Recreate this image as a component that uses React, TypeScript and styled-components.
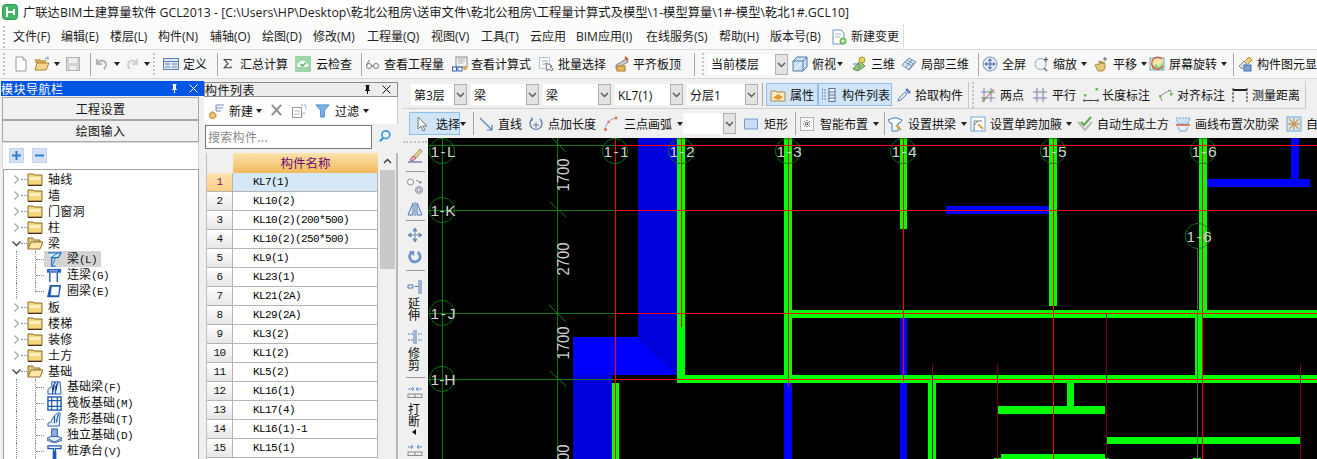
import React from 'react';
import styled, { createGlobalStyle } from 'styled-components';

const UI = `"Open Sans","Noto Sans CJK SC",sans-serif`;
const CJK = `"Noto Sans CJK SC",sans-serif`;

const Global = createGlobalStyle`
  html, body { margin: 0; padding: 0; background: #f0f0f0; }
  * { box-sizing: border-box; }
`;

const Page = styled.div`
  width: 1317px; height: 459px; overflow: hidden; display: flex; flex-direction: column;
  font: 12px/16px ${UI}; color: #111; background: #f0f0f0;
`;
const TitleBar = styled.div`
  height: 24px; flex: none; background: #fff; display: flex; align-items: center; gap: 5px; padding-left: 2px;
  font-size: 12.32px; white-space: nowrap; color: #1a1a1a;
`;
const TitleText = styled.span`padding-top: 1px;`;
const MenuBar = styled.div`height: 25px; flex: none; background: #fff; display: flex;`;
const MenuGroup = styled.div`
  width: 904px; height: 25px; display: flex; align-items: center; padding-left: 3px;
  border-right: 1px solid #ddd; background: #fbfbfb;
`;
const MenuItem = styled.div<{ $w: number }>`
  width: ${p => p.$w}px; flex: none; display: flex; align-items: center; gap: 4px; white-space: nowrap; color: #222; padding-top: 1px;
`;
const Grip = styled.div<{ $w?: number }>`
  width: ${p => p.$w ?? 10}px; flex: none; height: 22px;
  &::before { content: ''; display: block; width: 0; height: 100%; border-left: 2px dotted #c4c4c4; }
`;
const TopToolbar = styled.div`
  height: 30px; flex: none; display: flex; align-items: center; padding-left: 3px; overflow: hidden;
  background: #f7f7f7; border-top: 1px solid #dcdcdc; border-bottom: 1px solid #d8d8d8;
`;
const Sep = styled.div<{ $w: number }>`
  width: ${p => p.$w}px; flex: none; height: 23px; display: flex; justify-content: center;
  &::after { content: ''; width: 1px; height: 100%; background: #a8a8a8; }
`;
const Tool = styled.div<{ $w?: number; $gap?: number; $active?: boolean; $pad?: number }>`
  ${p => (p.$w ? `width:${p.$w}px;` : '')}
  flex: none; display: flex; align-items: center; gap: ${p => p.$gap ?? 4}px; white-space: nowrap; height: 23px;
  padding-left: ${p => p.$pad ?? 0}px;
  ${p => (p.$active ? 'background:#cfe4f7;border:1px solid #8ec1ea;' : '')}
`;
const ToolText = styled.span`padding-top: 2px;`;
const Arrow = styled.span`
  width: 0; height: 0; flex: none; margin-left: 0; border-left: 3.5px solid transparent; border-right: 3.5px solid transparent;
  border-top: 4px solid #222;
`;
const Glyph = styled.svg<{ $s?: number }>`flex: none; width: ${p => p.$s ?? 16}px; height: ${p => p.$s ?? 16}px; display: block;`;
const Combo = styled.div<{ $w: number; $mr?: number }>`
  width: ${p => p.$w}px; height: 21px; flex: none; margin-right: ${p => p.$mr ?? 4}px; background: #fff; display: flex;
  align-items: center; justify-content: space-between; padding-left: 3px; white-space: nowrap;
`;
const ComboBtn = styled.div`
  width: 13px; height: 21px; background: #e3e3e3; border: 1px solid #b0b0b0; display: flex; align-items: center; justify-content: center;
`;

const Main = styled.div`flex: 1; min-height: 0; display: flex;`;
const NavCol = styled.div`width: 203px; margin-left: 1px; flex: none; padding-top: 2px; display: flex; flex-direction: column;`;
const NavHead = styled.div`
  height: 15px; flex: none; background: #0055e3; color: #fff; display: flex; align-items: center; justify-content: space-between;
  font: 12px/15px ${CJK}; letter-spacing: .5px; padding-right: 6px;
`;
const HeadIcons = styled.div`display: flex; align-items: center; gap: 10px;`;
const NavBody = styled.div`flex: 1; min-height: 0; padding: 1px 5px 0 1px; display: flex; flex-direction: column;`;
const NavBtn = styled.div<{ $h: number }>`
  height: ${p => p.$h}px; flex: none; border: 1px solid #a8a8a8; background: #f0f0f0; display: flex; align-items: center; justify-content: center;
  font: 12px/16px ${CJK}; letter-spacing: .4px;
`;
const PlusRow = styled.div`
  height: 27px; flex: none; background: #fff; border: 1px solid #d8d8d8; border-bottom: 0; display: flex; align-items: flex-start; gap: 8px;
  padding: 5px 0 0 6px;
`;
const SquareBtn = styled.div`width: 15px; height: 15px; background: #d4e0f7; border: 1px solid #c4d2ee; display: flex; align-items: center; justify-content: center;`;
const Tree = styled.div`
  flex: 1; min-height: 0; background: #fff; border: 1px solid #a0a0a0; border-bottom: 0; padding-top: 1px; margin-left: 1px; overflow: hidden;
  font: 12px/16px ${CJK};
`;
const FolderRow = styled.div`height: 16px; display: flex; align-items: center; padding-left: 8px; gap: 0;`;
const Dots = styled.span`width: 6px; height: 0; flex: none; border-top: 1px dotted #888;`;
const FolderLabel = styled.span`margin-left: 5px; letter-spacing: .2px;`;
const ChildRow = styled.div`height: 16px; display: flex; align-items: center; padding-left: 12px;`;
const GuideOuter = styled.span`
  width: 19px; flex: none; align-self: flex-start; height: 16px; border-left: 1px dotted #888;
`;
const GuideInner = styled.span<{ $last?: boolean }>`
  width: 9px; flex: none; align-self: flex-start; height: ${p => (p.$last ? 9 : 16)}px; border-left: 1px dotted #888; position: relative;
  &::after { content: ''; position: absolute; left: 0; right: 0; top: 8px; border-top: 1px dotted #888; }
`;
const ChildItem = styled.div<{ $sel?: boolean }>`
  display: flex; align-items: center; gap: 5px; padding: 0 4px 0 3px; height: 16px; white-space: nowrap;
  background: ${p => (p.$sel ? '#d4d4d4' : 'transparent')};
`;
const Mono = styled.span`font: 11px/16px "Liberation Mono", monospace; letter-spacing: -.6px;`;

const ListCol = styled.div`width: 194px; flex: none; padding-top: 3px; display: flex; flex-direction: column;`;
const ListHead = styled.div`
  height: 15px; flex: none; background: #ececec; border: 1px solid #8a8a8a; display: flex; align-items: center; justify-content: space-between;
  font: 12px/13px ${CJK}; letter-spacing: .5px; padding-right: 6px;
`;
const ListTools = styled.div`height: 27px; flex: none; background: #fff; display: flex; align-items: center; padding-left: 5px; border-right: 1px solid #ccc;`;
const SearchRow = styled.div`height: 29px; flex: none; display: flex; align-items: flex-start; padding: 1px 0 0 1px; gap: 6px;`;
const SearchInput = styled.div`
  width: 167px; height: 24px; background: #fff; border: 1px solid #777; padding-left: 2px; color: #8a8a8a; font: 12px/21px ${CJK}; letter-spacing: .3px;
`;
const SearchBtn = styled.div`padding-top: 4px;`;
const TableWrap = styled.div`
  flex: 1; min-height: 0; display: flex; padding-left: 2px; overflow: hidden; border-right: 2px solid #b8b8b8; background: #f0f0f0;
`;
const Table = styled.div`width: 172px; flex: none; background: #fff; border-left: 1px solid #c0c0c0;`;
const HeadRow = styled.div`height: 20px; display: flex;`;
const Corner = styled.div`width: 26px; flex: none; background: #f0f0f0;`;
const NameHead = styled.div`
  flex: 1; background: linear-gradient(#fbe3ad, #f0b95c); color: #6b0a75; display: flex; align-items: center; justify-content: center;
  font: 12.5px/16px ${CJK};
`;
const Row = styled.div`height: 19px; display: flex; border-bottom: 1px solid #b4b4b4;`;
const Idx = styled.div<{ $sel?: boolean }>`
  width: 26px; flex: none; border-right: 1px solid #b4b4b4; display: flex; align-items: center; justify-content: center;
  background: ${p => (p.$sel ? 'linear-gradient(#fde3b0,#fbcf85)' : 'linear-gradient(#fff,#e6e6e6)')};
  color: ${p => (p.$sel ? '#70107a' : '#111')};
  font: 11px/16px "Liberation Mono", monospace; letter-spacing: -.6px;
`;
const Name = styled.div<{ $sel?: boolean }>`
  flex: 1; padding-left: 20px; border-right: 1px solid #b4b4b4; background: ${p => (p.$sel ? '#d6e8f8' : '#fff')}; white-space: nowrap;
  font: 11px/18px "Liberation Mono", monospace; letter-spacing: -.6px; color: #000;
`;
const Scroll = styled.div`width: 16px; flex: none; display: flex; flex-direction: column; align-items: center; margin-left: 1px;`;
const ScrollUp = styled.div`height: 17px; flex: none; display: flex; align-items: center; justify-content: center;`;
const Thumb = styled.div`width: 15px; height: 99px; background: #c9c9c9;`;

const WorkCol = styled.div`flex: 1; min-width: 0; display: flex; flex-direction: column; padding: 2px 0 0 4px;`;
const Row2 = styled.div`
  height: 28px; flex: none; width: 904px; display: flex; align-items: center; padding-left: 9px;
  border-bottom: 1px solid #d0d0d0; border-right: 1px solid #c8c8c8; overflow: hidden;
`;
const Row3 = styled.div`height: 29px; flex: none; display: flex; align-items: center; padding-left: 7px; overflow: hidden;`;
const GripSep = styled.div`
  width: 12px; flex: none; height: 26px; display: flex; gap: 2px;
  &::before { content: ''; width: 1px; height: 100%; background: #c8c8c8; }
  &::after { content: ''; height: 100%; border-left: 2px dotted #c4c4c4; margin-left: 1px; }
`;
const Work = styled.div`flex: 1; min-height: 0; display: flex;`;
const VBar = styled.div`width: 26px; flex: none; display: flex; flex-direction: column; align-items: center; overflow: hidden;`;
const VGrip = styled.div`width: 24px; height: 0; margin-top: 3px; border-top: 2px dotted #c4c4c4; flex: none;`;
const VSep = styled.div<{ $mt: number }>`width: 19px; height: 1px; background: #999; margin-top: ${p => p.$mt}px; flex: none;`;
const VIcon = styled.div<{ $mt: number }>`margin-top: ${p => p.$mt}px; flex: none; height: 16px;`;
const VText = styled.div<{ $mt: number }>`
  width: 12px; margin-top: ${p => p.$mt}px; flex: none; font: 12px/12px ${CJK}; text-align: center; color: #111; margin-right: 2px;
`;
const TinyLeft = styled.span`
  flex: none; margin: 2px 2px 0 0; width: 0; height: 0; border-top: 3.5px solid transparent; border-bottom: 3.5px solid transparent; border-right: 4px solid #111;
`;
const CadBox = styled.div`flex: 1; min-width: 0; background: #000; overflow: hidden;`;
const CadSvg = styled.svg`display: block; width: 889px; height: 321px;`;

const dark = '#5f7fb0';
const blue = '#2a5db5';
const I: Record<string, React.ReactNode> = {
  logo: <><rect x=".5" y=".5" width="15" height="15" rx="3" fill="#43b764" stroke="#2f9d4f" /><path d="M4 3h2v4h5V5h2v6h-2V9H6v4H4z" fill="#fff" /></>,
  doc: <><path d="M3 1h7l3 3v11H3z" fill="#fff" stroke="#999" /><path d="M10 1v3h3" fill="#eee" stroke="#999" /></>,
  open: <><path d="M1 5V3h5l1 1h5v3H1z" fill="#cfa95a" /><path d="M1 14 3 7h12l-3 7z" fill="#f3d689" stroke="#a98436" /><path d="M11 3l3-2v3" fill="none" stroke="#6d93c7" /></>,
  save: <><rect x="1.5" y="1.5" width="13" height="13" fill="#d4d4d4" stroke="#b0b0b0" /><rect x="4" y="2" width="8" height="5" fill="#f0f0f0" /><rect x="5" y="10" width="6" height="4" fill="#f0f0f0" /></>,
  undo: <path d="M3 3v5h5M3 8c2-5 9-4 9 1 0 2-1 3-2 4" fill="none" stroke="#b4b4b4" strokeWidth="2" />,
  redo: <path d="M13 3v5H8M13 8C11 3 4 4 4 9c0 2 1 3 2 4" fill="none" stroke="#cfcfcf" strokeWidth="2" />,
  define: <><rect x=".5" y="2.5" width="15" height="11" fill="#dfe8f4" stroke={dark} /><path d="M1 5.5h14M2 8h5M2 11h5M9 8h5M9 11h5" stroke={dark} /></>,
  sigma: <path d="M3 2h9v2M12 2H3l5 5.500L3 13h9v-2" fill="none" stroke="#444" strokeWidth="1.500" />,
  cloud: <><rect width="16" height="16" rx="1" fill="#9ed6a8" /><path d="M3 11c-2-1-1-4 1-4 1-3 6-3 7 0 3 0 3 4 1 4z" fill="#f4fbf5" /><path d="M5.500 8l2 2 3-3" fill="none" stroke="#4da35f" strokeWidth="1.300" /></>,
  glasses: <><circle cx="4" cy="10" r="2.500" fill="#fff" stroke="#777" /><circle cx="11" cy="10" r="2.500" fill="#fff" stroke="#777" /><path d="M6.500 10h2M1.500 9l3-5" stroke="#777" fill="none" /></>,
  report: <><rect x="4" y="1" width="11" height="10" fill="#f4f4f4" stroke="#888" /><path d="M6 3h7M6 5h7M6 7h5" stroke="#aaa" /><rect x=".5" y="11" width="4" height="4" fill="#fff" stroke={blue} /><rect x="6" y="11" width="4" height="4" fill="#fff" stroke={blue} /><circle cx="13" cy="12" r="2" fill="#d9a441" /></>,
  batch: <><rect x="1.500" y="1.500" width="10" height="11" fill="#fff" stroke="#8fa7c9" strokeDasharray="2 1" /><path d="M4 5h6M4 8h6" stroke="#aaa" /><path d="M8 7l1 8 2-2 3 2 1-2-3-2 2-1z" fill="#fff" stroke="#777" /></>,
  flat: <><path d="M2 9l10-6 2 3-12 7z" fill="#c7c7c7" stroke="#888" /><rect x="3" y="10" width="8" height="5" fill="#e7b659" stroke="#a67a25" /><path d="M11 1l3 3" stroke="#c05a2a" strokeWidth="2" /></>,
  cube: <><path d="M1 5l4-4h10v10l-4 4H1z" fill="#cfe2f5" stroke="#4d7aa8" /><path d="M1 5h10v10M11 5l4-4" fill="none" stroke="#4d7aa8" /><path d="M2 14 10 6" stroke="#fff" /></>,
  three: <><path d="M2 13 9 5l5 5-7 5z" fill="#8dc96f" stroke="#58913e" /><circle cx="11" cy="4" r="3" fill="#e5d25b" stroke="#aa9a2d" /><path d="M2 8h6v5" fill="none" stroke={dark} /></>,
  lattice: <><path d="M1 9l7-7 7 4-7 8z" fill="#dfe8f5" stroke="#6f8db8" /><path d="M4 6l7 4M6 4l7 4M5 11l6-7M8 13l5-6" stroke="#6f8db8" /></>,
  full: <><circle cx="8" cy="8" r="7" fill="#dfe9f7" stroke="#7591ba" /><path d="M8 3v10M3 8h10M8 3 6.500 5M8 3l1.500 2M8 13l-1.500-2M8 13l1.500-2M3 8l2-1.500M3 8l2 1.500M13 8l-2-1.500M13 8l-2 1.500" stroke="#3a5f98" fill="none" /></>,
  zoomi: <><circle cx="6.500" cy="8" r="5.500" fill="#f2f5f8" stroke="#99a6b8" /><path d="M10 12l3 3" stroke="#888" strokeWidth="2" /><path d="M12 1v5M10 3.500h4" stroke="#555" /></>,
  pan: <><path d="M2 9l2-1 2 1V5l1 0 1 3 1-3 1 3 1-2 1 3v3l-2 3H5z" fill="#e6c97c" stroke="#a98b3f" /><path d="M12 1v4M10 3h4" stroke="#666" /></>,
  spin: <><rect x="1" y="2" width="14" height="12" fill="#f3e7a5" stroke="#66a8d8" /><path d="M3 12l4-4 3 3 4-5v7H3z" fill="#8fcf8d" /><path d="M13 3A6 6 0 1 0 14 10" fill="none" stroke="#e24b3b" strokeWidth="1.300" /></>,
  show: <><path d="M2 10l5-5 3 3-5 5z" fill="#ddd" stroke="#888" /><path d="M8 5l4-4 3 3-4 4" fill="#eed17a" stroke="#a78a3c" /><rect x="7" y="9" width="7" height="6" fill="#7ba0d4" stroke="#4c74ad" /></>,
  newDoc: <><path d="M2 1h8l3 3v11H2z" fill="#fff" stroke="#6d93c7" /><path d="M4 5h6M4 8h5" stroke="#9db6d8" /><circle cx="12" cy="12" r="3.500" fill="#6cbb4c" /><path d="M12 10v4M10 12h4" stroke="#fff" /></>,
  attr: <><path d="M1 4h5l1 1h8v9H1z" fill="#f7ecc7" stroke="#a88a4a" /><path d="M3 11l5-4 5 3-4 3z" fill="#e59a2c" /></>,
  listI: <><path d="M1.500 2v12M4 2v12" stroke="#6f8db8" strokeDasharray="2 1" /><rect x="8" y="1.500" width="6" height="13" fill="#f5f5f5" stroke="#4f6f9f" /><path d="M8 5h6M8 8h6M8 11h6" stroke="#4f6f9f" /></>,
  pick: <><path d="M2 14l1-3 6-6 2 2-6 6z" fill="#dce8f7" stroke="#5d86bd" /><path d="M9 3l2-2 4 4-2 2z" fill="#5d86bd" /></>,
  two: <><path d="M4 1v14M11 1v14M1 5h14M1 11h14" stroke="#8282b0" /><path d="M2 15 14 2" stroke="#d9453a" /><circle cx="4" cy="12" r="1.500" fill="#67b34a" /><circle cx="11" cy="5" r="1.500" fill="#67b34a" /></>,
  para: <path d="M5 1v14M11 1v14M1 5h14M1 11h14" stroke="#7c7ca6" />,
  len: <><path d="M1 12v3M15 12v3M1 13.500h14" stroke="#444" /><rect x="1" y="7" width="2.500" height="2.500" fill="#6abf4b" /><rect x="12.500" y="1" width="2.500" height="2.500" fill="#6abf4b" /><path d="M6 13.500l2-1v2zM10 13.500l-2-1" fill="#444" /></>,
  align: <><path d="M3 9l10-6M3 9l2 5M13 3l2 4" stroke="#555" strokeDasharray="2 1" fill="none" /><rect x="2" y="8" width="2.500" height="2.500" fill="#6abf4b" /><rect x="13" y="6" width="2.500" height="2.500" fill="#6abf4b" /></>,
  meas: <><path d="M1 1v14M15 1v14" stroke="#333" strokeDasharray="3 1" /><path d="M1 3h14" stroke="#222" strokeWidth="2" /></>,
  cursor: <path d="M4 1v12l3-3 2 5 2-1-2-4h4z" fill="#f7f7f7" stroke="#777" />,
  line: <path d="M2 2l12 12M14 9v5H9" fill="none" stroke="#5580b8" strokeWidth="1.200" />,
  addLen: <><path d="M12 3a6 6 0 1 1-8 0" fill="none" stroke="#5f7fa8" strokeWidth="1.300" /><path d="M3 1l2 3-3 1M8 6v6M5 9h6" fill="none" stroke="#5f7fa8" /></>,
  arc: <><path d="M2 14C3 7 7 3 13 2" fill="none" stroke="#8aa0bf" /><circle cx="2.500" cy="13.500" r="1.500" fill="#e1694f" /><circle cx="5.500" cy="6" r="1.200" fill="#e1694f" /><circle cx="13" cy="2" r="1.500" fill="#e1694f" /></>,
  rect: <rect x="1.500" y="3" width="13" height="10" fill="#c9dbf5" stroke="#7d9ccc" />,
  smart: <><rect x="1.500" y="1.500" width="13" height="13" fill="#f8f8f8" stroke="#777" strokeDasharray="1 1" /><path d="M8 4v8M4 8h8M5 5l6 6M11 5l-6 6" stroke="#444" strokeDasharray="1 1" /></>,
  arch: <><path d="M1 4l5-2h4l5 2-2 3h-2v8H5V7H3z" fill="#fff" stroke="#3f7fbd" /><path d="M9 9l5 5" stroke="#d9a441" strokeWidth="2" /></>,
  haunch: <><rect x="1" y="1" width="14" height="14" fill="#fff" stroke="#6ba6d8" /><path d="M4 15V5h8M4 9l4-4" fill="none" stroke="#777" /><path d="M8 8l5 5" stroke="#d9a441" strokeWidth="2" /></>,
  earth: <><path d="M1 6l7 8 7-8" fill="none" stroke="#bbb" strokeWidth="2" /><path d="M4 6l3 3 7-8" fill="none" stroke="#5aad4a" strokeWidth="2" /></>,
  rib: <><path d="M1 2h14l-2 6H3z" fill="#cfe3f5" stroke="#6ba6d8" strokeDasharray="2 1" /><path d="M1 9h14" stroke="#d55a4a" strokeWidth="1.500" /><path d="M3 11l2 4h6l2-4" fill="none" stroke="#6ba6d8" /></>,
  autoRib: <><rect x="1" y="1" width="14" height="14" fill="#d7e9f8" stroke="#6ba6d8" /><path d="M3 3l10 10M13 3 3 13M8 2v12M2 8h12" stroke="#c99b52" strokeWidth="1.300" /></>,
  addNew: <><path d="M7 2h8M7 5h7M7 8h5M7 2v6" stroke="#6f8db8" fill="none" /><path d="M2 9h3v2h2v3H5v2H2v-2H0v-3h2z" fill="#efc96b" stroke="#b9934a" /></>,
  del: <path d="M3 2l10 11M13 2 3 13" stroke="#8a8a8a" strokeWidth="2" />,
  copy: <><rect x="1.500" y="4.500" width="9" height="10" fill="#fff" stroke="#9a9a9a" /><path d="M3 8h6M3 11h6" stroke="#bbb" /><path d="M10 2h5v5M13 9v2h-2" fill="none" stroke="#7f9fc9" strokeDasharray="2 1" /></>,
  filter: <path d="M1 2h14l-5 6v7H6V8z" fill="#79b2ea" stroke="#4c86c4" />,
  search: <><circle cx="9" cy="6.500" r="4.500" fill="#f3f8fd" stroke="#3d9be0" strokeWidth="2" /><path d="M6 10l-4 4" stroke="#3d9be0" strokeWidth="2.500" /></>,
  folder: <><path d="M1 4V3h5l1 1h8v10H1z" fill="#f7d67c" stroke="#8a6a2a" /><path d="M2 6h12v3H2z" fill="#fdf0c0" /><path d="M1 14.500h14" stroke="#3d3320" /></>,
  folderOpen: <><path d="M1 14V3h5l1 2h6v2" fill="#e6c878" stroke="#8a6a2a" /><path d="M1 14 4 7h12l-3 7z" fill="#fbe7a8" stroke="#8a6a2a" /></>,
  beam: <><path d="M1 1h14l-3 5H5v9h4" fill="#d8ebfb" stroke="#1f6fc4" strokeWidth="1.300" /><path d="M4 6 12 1M6 14l3-8" stroke="#1f6fc4" /></>,
  link: <><rect x="0" y="1" width="15" height="4" fill="#2a62c0" /><path d="M3 3h9" stroke="#fff" strokeDasharray="2 1" /><path d="M3 5v10M11 5v10" stroke="#1f5ab0" strokeWidth="1.500" /></>,
  ring: <><path d="M3 1h12l-2 13H0z" fill="#1f5ab0" /><path d="M5 3h8l-1 9H4z" fill="#fff" /></>,
  fbeam: <><path d="M1 15v-5l4-3V2h9l1 13z" fill="#e6eef9" stroke="#1f5ab0" /><path d="M9 2l-3 6v7M12 2 9 8v7" stroke="#1f5ab0" strokeWidth="1.300" /></>,
  raft: <><rect x="1" y="1" width="14" height="14" fill="#fff" stroke="#1f5ab0" strokeWidth="1.500" /><path d="M5 1v14M11 1v14M1 5h14M1 11h14" stroke="#1f5ab0" strokeWidth="1.300" /></>,
  strip: <><path d="M1 15v-3l3-1 3-6 4-4h3l-1 14z" fill="#eef3fb" stroke="#1f5ab0" /><path d="M8 4v8M12 2l-2 9" stroke="#1f5ab0" strokeWidth="1.300" /></>,
  iso: <><path d="M0 11l8-4 8 4-8 4z" fill="#dce7f8" stroke="#1f5ab0" /><path d="M0 11v2l8 3 8-3v-2" fill="none" stroke="#1f5ab0" /><rect x="5" y="1" width="6" height="8" fill="#8fb0e3" stroke="#1f5ab0" /></>,
  pile: <><path d="M1 2h14v3H9v3H7V5H1z" fill="#e8eff9" stroke="#1f5ab0" strokeWidth="1.300" /><rect x="6" y="8" width="4" height="8" fill="#1f5ab0" /></>,
  brush: <><path d="M1 14h14" stroke="#6f87ad" strokeWidth="1.500" /><path d="M3 12l3-4 3 2-3 3z" fill="#e7a3c0" stroke="#b85a8a" /><path d="M7 8l6-7 2 2-6 7z" fill="#e9d796" stroke="#a8904a" /></>,
  circles: <><circle cx="3.500" cy="4" r="3" fill="#fff" stroke="#889" /><circle cx="12" cy="12" r="3.500" fill="none" stroke="#889" /><circle cx="12" cy="12" r="2" fill="none" stroke="#889" /><path d="M9 2l5 3M14 3v2h-2" fill="none" stroke="#889" /></>,
  mirror: <><path d="M1 14 6 2v12zM15 14 10 2v12z" fill="#dbe7f7" stroke="#4f78b3" /><path d="M8 1v14" stroke="#4f78b3" /></>,
  move: <path d="M8 1v14M1 8h14M8 1 6 4h4zM8 15l-2-3h4zM1 8l3-2v4zM15 8l-3-2v4z" fill="#6f8db8" stroke="#6f8db8" />,
  rotate: <><path d="M11 2.500A6 6 0 1 1 4 3" fill="none" stroke="#6f8fcf" strokeWidth="3" /><path d="M1 1h6v6z" fill="#6f8fcf" /></>,
  extend: <><path d="M14 1v14M12 1v14" stroke="#4f78b3" /><path d="M1 6h5v3H1zM8 7.500h3" fill="#eef3fb" stroke="#4f78b3" /></>,
  trim: <><path d="M7 1v14M9 1v14" stroke="#4f78b3" /><path d="M1 5h6M1 11h6M11 5h4M11 11h4" stroke="#4f78b3" strokeDasharray="2 1" /></>,
  breakI: <><path d="M1 4h5M5 2l2 2-2 2M15 4h-5M11 2 9 4l2 2" fill="none" stroke="#5f8ad0" /><rect x="1" y="9" width="14" height="3.500" fill="#eee" stroke="#888" /><path d="M8 9v4" stroke="#888" /></>,
  joinI: <><path d="M1 4h5M4 2l2 2-2 2M15 4h-5M12 2l-2 2 2 2" fill="none" stroke="#5f8ad0" /><rect x="1" y="9" width="14" height="3.500" fill="#eee" stroke="#888" /><path d="M8 9v4" stroke="#888" /></>,
};

const Ic = ({ n, s }: { n: string; s?: number }) => <Glyph $s={s} viewBox="0 0 16 16">{I[n]}</Glyph>;

const Chevron = ({ color = '#555', up }: { color?: string; up?: boolean }) => (
  <Glyph $s={9} viewBox="0 0 9 9"><path d={up ? 'M1 6l3.500-3.500L8 6' : 'M1 3l3.500 3.500L8 3'} fill="none" stroke={color} strokeWidth="1.300" /></Glyph>
);

const Pin = ({ c }: { c: string }) => (
  <Glyph $s={9} viewBox="0 0 9 9"><path d="M2.500 0h4v1h-.500v4H7v1H5v3H4V6H2V5h1V1h-.500z" fill={c} /></Glyph>
);
const Close = ({ c }: { c: string }) => (
  <Glyph $s={9} viewBox="0 0 9 9"><path d="M.500.500l8 8M8.500.500l-8 8" stroke={c} /></Glyph>
);

type TP = { n?: string; t?: string; w?: number; gap?: number; arrow?: boolean; active?: boolean; pad?: number; ah?: number; s?: number };
const ArrowGap = styled.span<{ $m: number }>`display: inline-flex; margin-left: ${p => p.$m}px;`;
const T = ({ n, t, w, gap, arrow, active, pad, ah = 0, s }: TP) => (
  <Tool $w={w} $gap={gap} $active={active} $pad={pad}>
    {n && <Ic n={n} s={s} />}
    {t && <ToolText>{t}</ToolText>}
    {arrow && <ArrowGap $m={ah}><Arrow /></ArrowGap>}
  </Tool>
);

const Cb = ({ t, w, mr }: { t?: string; w: number; mr?: number }) => (
  <Combo $w={w} $mr={mr}><ToolText>{t}</ToolText><ComboBtn><Chevron /></ComboBtn></Combo>
);

const menus: [string, number][] = [
  ['文件(F)', 48], ['编辑(E)', 49], ['楼层(L)', 48], ['构件(N)', 52], ['辅轴(O)', 52], ['绘图(D)', 51], ['修改(M)', 54], ['工程量(Q)', 64],
  ['视图(V)', 50], ['工具(T)', 49], ['云应用', 46], ['BIM应用(I)', 70], ['在线服务(S)', 73], ['帮助(H)', 51], ['版本号(B)', 61],
];

type Node = { l: string; open?: boolean; kids?: [string, string, string][] };
const tree: Node[] = [
  { l: '轴线' }, { l: '墙' }, { l: '门窗洞' }, { l: '柱' },
  { l: '梁', open: true, kids: [['梁', '(L)', 'beam'], ['连梁', '(G)', 'link'], ['圈梁', '(E)', 'ring']] },
  { l: '板' }, { l: '楼梯' }, { l: '装修' }, { l: '土方' },
  { l: '基础', open: true, kids: [['基础梁', '(F)', 'fbeam'], ['筏板基础', '(M)', 'raft'], ['条形基础', '(T)', 'strip'], ['独立基础', '(D)', 'iso'], ['桩承台', '(V)', 'pile']] },
];

const TreeChevron = ({ open }: { open?: boolean }) => (
  <Glyph $s={9} viewBox="0 0 9 9">
    <path d={open ? 'M.500 2.500l4 4 4-4' : 'M2.500.500l4 4-4 4'} fill="none" stroke={open ? '#444' : '#aaa'} strokeWidth="1.400" />
  </Glyph>
);

const rows = ['KL7(1)', 'KL10(2)', 'KL10(2)(200*500)', 'KL10(2)(250*500)', 'KL9(1)', 'KL23(1)', 'KL21(2A)', 'KL29(2A)', 'KL3(2)', 'KL1(2)', 'KL5(2)', 'KL16(1)', 'KL17(4)', 'KL16(1)-1', 'KL15(1)'];

const G = '#00ff00', B = '#0000ff', B2 = '#0000dc', R = '#ff0000', DR = '#7a0000', GL = '#0a7a0a';
const greens = [
  [677, 138, 8, 245], [677, 375, 640, 8], [784, 138, 8, 245], [792, 310, 525, 8], [612, 383, 7, 76], [900, 138, 7, 91], [1049, 138, 8, 168],
  [1199, 138, 8, 172], [1195, 318, 8, 57], [928, 383, 8, 76], [1067, 383, 7, 23], [998, 406, 107, 8], [1106, 437, 194, 7], [1001, 454, 104, 5],
  [994, 458, 7, 1], [1105, 458, 4, 1], [1193, 458, 8, 1],
];
const blues = [[784, 383, 8, 76], [900, 318, 7, 57], [900, 383, 7, 76], [946, 206, 103, 8], [1207, 179, 103, 8], [1291, 138, 8, 41]];
const reds: [number, number, number][] = [[615, 138, 459], [681, 138, 327], [788, 138, 387], [903, 138, 382], [1053, 138, 459], [1202, 138, 459]];
const darkReds: [number, number, number][] = [[932, 364, 459], [997, 365, 459], [1106, 313, 459], [1300, 364, 459]];
const circles: [number, number, string][] = [
  [442, 151, '1-L'], [442, 210, '1-K'], [442, 313, '1-J'], [442, 379, '1-H'], [615, 151, '1-1'], [681, 151, '1-2'], [788, 151, '1-3'],
  [903, 151, '1-4'], [1053, 151, '1-5'], [1203, 151, '1-6'], [1198, 236, '1-6'],
];
const ticks = [[552, 138, 566, 152], [550, 202, 566, 217], [549, 305, 566, 322], [550, 371, 566, 386]];
const dims: [number, string][] = [[175, '1700'], [259, '2700'], [343, '1700'], [461, '2700']];

const Cad = () => (
  <CadSvg viewBox="428 138 889 321">
    <polygon points="638,138 677,138 677,375 638,337" fill={B2} />
    <polygon points="573,337 638,337 677,375 573,375" fill={B} />
    <polygon points="573,375 612,375 612,459 573,459" fill={B2} />
    {blues.map(([x, y, w, h], i) => <rect key={i} x={x} y={y} width={w} height={h} fill={B} />)}
    {greens.map(([x, y, w, h], i) => <rect key={i} x={x} y={y} width={w} height={h} fill={G} />)}
    <path d="M442.500 138V459M557.500 138V459M428 145.500H615M428 210.500H615M428 313.500H615M428 379.500H615" stroke={GL} fill="none" />
    {ticks.map(([a, b, c, d], i) => <line key={i} x1={a} y1={b} x2={c} y2={d} stroke={GL} />)}
    <path d="M1197.500 248V459" stroke="#5a5a5a" />
    {darkReds.map(([x, a, b], i) => <line key={i} x1={x + .5} y1={a} x2={x + .5} y2={b} stroke={DR} />)}
    <path d="M615 145.500H1317M615 210.500H1317M615 313.500H1317M615 379.500H1317" stroke={R} />
    {reds.map(([x, a, b], i) => <line key={i} x1={x + .5} y1={a} x2={x + .5} y2={b} stroke={R} />)}
    {circles.map(([x, y, t], i) => (
      <g key={i}>
        <circle cx={x} cy={y} r="12.500" fill="none" stroke={GL} strokeDasharray="6 .6" />
        <text x={x + 1} y={y + 5.500} textAnchor="middle" fontFamily="Liberation Sans" fontSize="15.500" textLength="25" lengthAdjust="spacing" fill="#cfcfcf">{t}</text>
      </g>
    ))}
    {dims.map(([y, t], i) => (
      <text key={i} transform={`translate(569 ${y}) rotate(-90)`} textAnchor="middle" fontFamily="Liberation Sans" fontSize="16" textLength="33" lengthAdjust="spacingAndGlyphs" fill="#cfcfcf">{t}</text>
    ))}
  </CadSvg>
);

export default function App() {
  return (
    <Page>
      <Global />
      <TitleBar>
        <Ic n="logo" />
        <TitleText>广联达BIM土建算量软件 GCL2013 - [C:\Users\HP\Desktop\乾北公租房\送审文件\乾北公租房\工程量计算式及模型\1-模型算量\1#-模型\乾北1#.GCL10]</TitleText>
      </TitleBar>
      <MenuBar>
        <MenuGroup>
          <Grip $w={10} />
          {menus.map(([m, w]) => <MenuItem key={m} $w={w}>{m}</MenuItem>)}
          <MenuItem $w={70}><Ic n="newDoc" />新建变更</MenuItem>
        </MenuGroup>
      </MenuBar>
      <TopToolbar>
        <Grip $w={10} />
        <T n="doc" w={21} />
        <T n="open" w={31} arrow />
        <T n="save" w={21} />
        <Sep $w={8} />
        <T n="undo" w={30} arrow />
        <T n="redo" w={29} arrow />
        <Grip $w={10} />
        <T n="define" t="定义" w={50} />
        <Sep $w={9} />
        <T n="sigma" s={12} t="汇总计算" gap={6} w={73} />
        <T n="cloud" t="云检查" gap={5} w={62} />
        <Sep $w={8} />
        <T n="glasses" t="查看工程量" gap={3} w={87} />
        <T n="report" t="查看计算式" gap={3} w={86} />
        <T n="batch" t="批量选择" w={76} />
        <T n="flat" t="平齐板顶" gap={3} w={72} />
        <Sep $w={16} />
        <Grip $w={6} />
        <Cb t="当前楼层" w={80} />
        <T n="cube" t="俯视" w={59} arrow ah={-3} />
        <T n="three" t="三维" w={50} />
        <T n="lattice" t="局部三维" w={74} />
        <Sep $w={7} />
        <T n="full" t="全屏" w={52} />
        <T n="zoomi" t="缩放" gap={3} w={59} arrow ah={1} />
        <T n="pan" t="平移" w={56} arrow />
        <T n="spin" t="屏幕旋转" w={81} arrow />
        <Sep $w={7} />
        <T n="show" t="构件图元显示" />
      </TopToolbar>
      <Main>
        <NavCol>
          <NavHead>
            <span>模块导航栏</span>
            <HeadIcons><Pin c="#fff" /><Close c="#fff" /></HeadIcons>
          </NavHead>
          <NavBody>
            <NavBtn $h={23}>工程设置</NavBtn>
            <NavBtn $h={22}>绘图输入</NavBtn>
            <PlusRow>
              <SquareBtn><Glyph $s={11} viewBox="0 0 11 11"><path d="M5.500 1v9M1 5.500h9" stroke="#2f7fc8" strokeWidth="2" /></Glyph></SquareBtn>
              <SquareBtn><Glyph $s={11} viewBox="0 0 11 11"><path d="M1 5.500h9" stroke="#2f7fc8" strokeWidth="2" /></Glyph></SquareBtn>
            </PlusRow>
            <Tree>
              {tree.map(node => (
                <React.Fragment key={node.l}>
                  <FolderRow>
                    <TreeChevron open={node.open} />
                    <Dots />
                    <Ic n={node.open ? 'folderOpen' : 'folder'} />
                    <FolderLabel>{node.l}</FolderLabel>
                  </FolderRow>
                  {node.kids?.map(([a, b, ic], i) => (
                    <ChildRow key={a}>
                      <GuideOuter />
                      <GuideInner $last={i === node.kids!.length - 1 && node.l === '梁'} />
                      <ChildItem $sel={a === '梁'}>
                        <Ic n={ic} s={15} />
                        <span>{a}<Mono>{b}</Mono></span>
                      </ChildItem>
                    </ChildRow>
                  ))}
                </React.Fragment>
              ))}
            </Tree>
          </NavBody>
        </NavCol>
        <ListCol>
          <ListHead>
            <span>构件列表</span>
            <HeadIcons><Pin c="#111" /><Close c="#111" /></HeadIcons>
          </ListHead>
          <ListTools>
            <T n="addNew" t="新建" w={60} arrow ah={-1} />
            <T n="del" s={15} w={22} />
            <T n="copy" w={24} />
            <T n="filter" s={15} t="过滤" gap={5} arrow ah={-1} />
          </ListTools>
          <SearchRow>
            <SearchInput>搜索构件...</SearchInput>
            <SearchBtn><Ic n="search" s={14} /></SearchBtn>
          </SearchRow>
          <TableWrap>
            <Table>
              <HeadRow><Corner /><NameHead>构件名称</NameHead></HeadRow>
              {rows.map((r, i) => (
                <Row key={i}>
                  <Idx $sel={i === 0}>{i + 1}</Idx>
                  <Name $sel={i === 0}>{r}</Name>
                </Row>
              ))}
            </Table>
            <Scroll>
              <ScrollUp><Chevron color="#333" up /></ScrollUp>
              <Thumb />
            </Scroll>
          </TableWrap>
        </ListCol>
        <WorkCol>
          <Row2>
            <Cb t="第3层" w={56} />
            <Cb t="梁" w={68} />
            <Cb t="梁" w={68} />
            <Cb t="KL7(1)" w={68} />
            <Cb t="分层1" w={71} mr={0} />
            <Sep $w={8} />
            <T n="attr" t="属性" w={52} active pad={3} />
            <T n="listI" t="构件列表" w={74} active pad={2} gap={5} />
            <T n="pick" t="拾取构件" w={76} pad={4} gap={3} />
            <GripSep />
            <T n="two" t="两点" w={52} />
            <T n="para" t="平行" w={51} />
            <T n="len" t="长度标注" w={74} gap={3} />
            <T n="align" t="对齐标注" w={75} />
            <T n="meas" t="测量距离" w={73} />
          </Row2>
          <Row3>
            <T n="cursor" t="选择" w={51} active pad={4} gap={6} />
            <Tool $w={9}><Arrow /></Tool>
            <Sep $w={9} />
            <T n="line" t="直线" w={50} />
            <T n="addLen" t="点加长度" w={75} />
            <T n="arc" t="三点画弧" w={80} gap={5} arrow />
            <Cb w={53} mr={7} />
            <T n="rect" t="矩形" w={49} gap={5} />
            <Sep $w={7} />
            <T n="smart" t="智能布置" w={82} gap={5} arrow />
            <Sep $w={6} />
            <T n="arch" t="设置拱梁" w={83} gap={5} arrow />
            <T n="haunch" t="设置单跨加腋" w={107} arrow />
            <T n="earth" t="自动生成土方" w={98} />
            <T n="rib" t="画线布置次肋梁" w={111} />
            <T n="autoRib" t="自" />
          </Row3>
          <Work>
            <VBar>
              <VGrip />
              <VIcon $mt={5}><Ic n="brush" /></VIcon>
              <VSep $mt={7} />
              <VIcon $mt={6}><Ic n="circles" /></VIcon>
              <VIcon $mt={7}><Ic n="mirror" /></VIcon>
              <VSep $mt={3} />
              <VIcon $mt={6}><Ic n="move" /></VIcon>
              <VIcon $mt={7}><Ic n="rotate" s={14} /></VIcon>
              <VSep $mt={4} />
              <VIcon $mt={8}><Ic n="extend" /></VIcon>
              <VText $mt={2}>延伸</VText>
              <VIcon $mt={8}><Ic n="trim" /></VIcon>
              <VText $mt={2}>修剪</VText>
              <VSep $mt={6} />
              <VIcon $mt={7}><Ic n="breakI" /></VIcon>
              <VText $mt={2}>打断</VText>
              <TinyLeft />
              <VIcon $mt={8}><Ic n="joinI" /></VIcon>
            </VBar>
            <CadBox><Cad /></CadBox>
          </Work>
        </WorkCol>
      </Main>
    </Page>
  );
}
